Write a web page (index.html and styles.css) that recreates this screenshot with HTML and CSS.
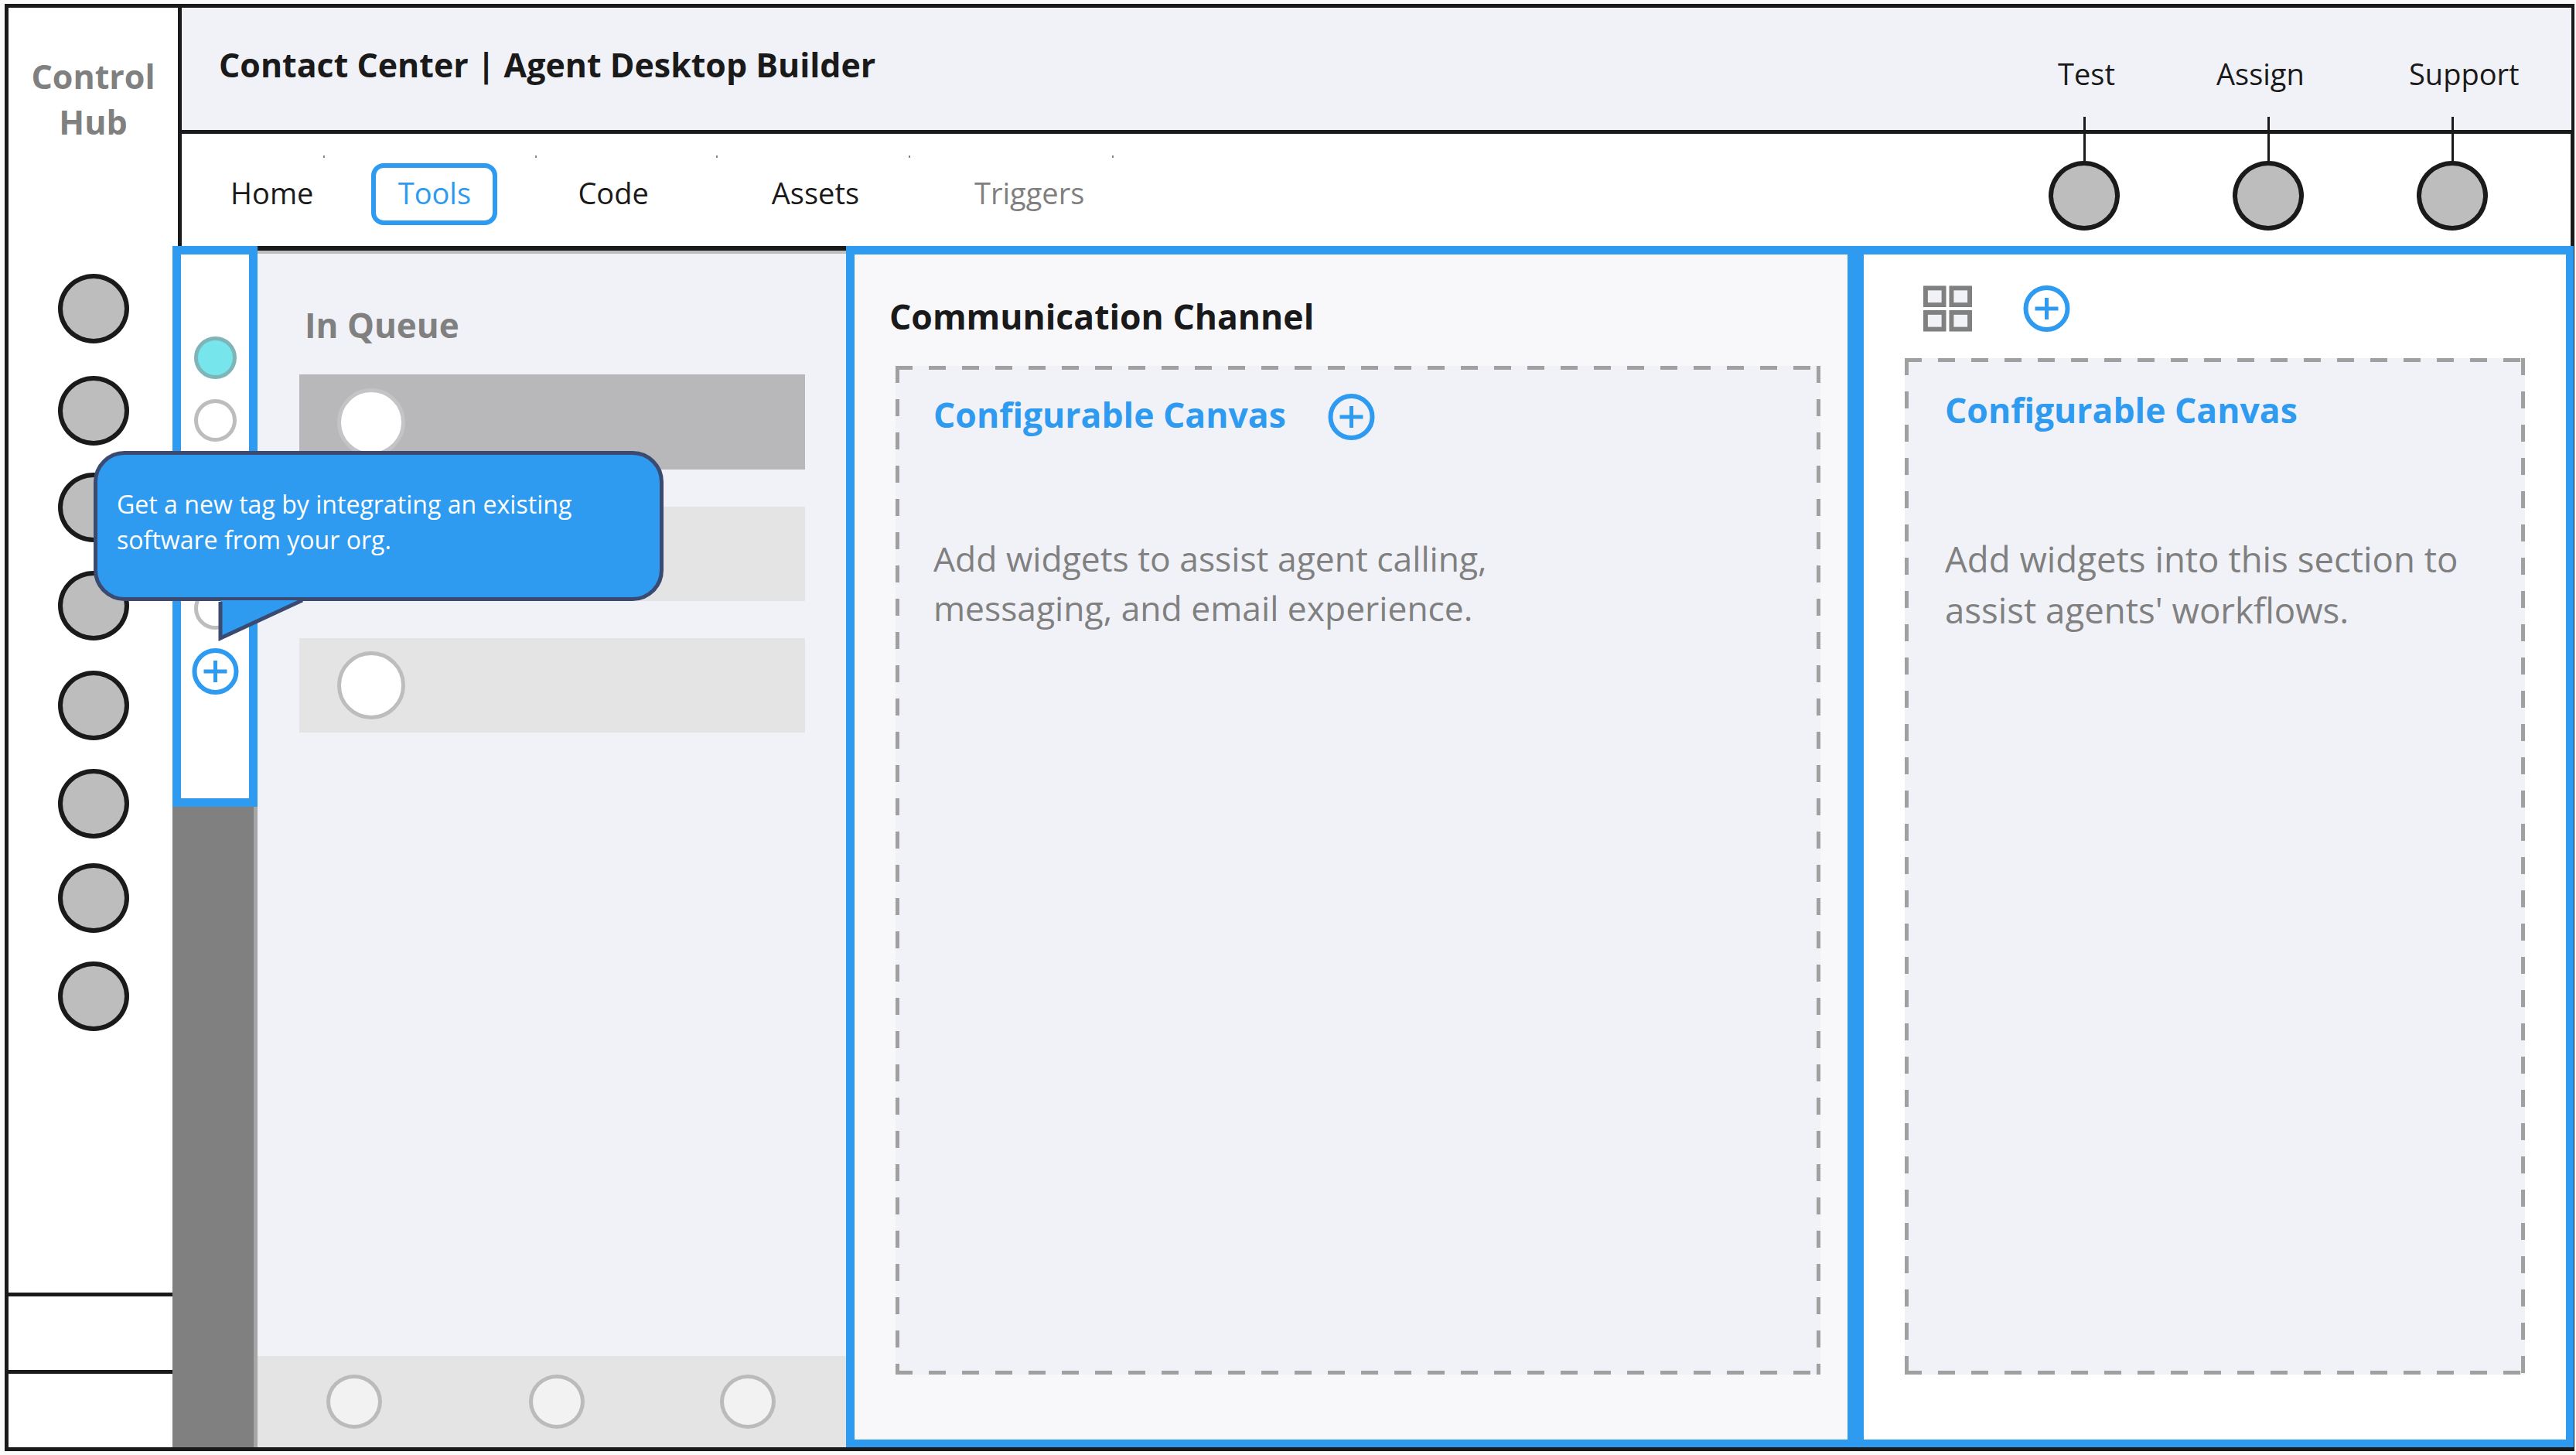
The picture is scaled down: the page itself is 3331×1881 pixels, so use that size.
FILE: index.html
```html
<!DOCTYPE html>
<html lang="en">
<head>
<meta charset="utf-8">
<title>Agent Desktop Builder</title>
<link rel="stylesheet" href="styles.css">
</head>
<body>
<div class="frame">
  <aside class="sidebar">
    <div class="brand">Control<br>Hub</div>
    <div class="side-dots">
      <span class="dot"></span><span class="dot"></span><span class="dot"></span><span class="dot"></span>
      <span class="dot"></span><span class="dot"></span><span class="dot"></span><span class="dot"></span>
    </div>
    <div class="side-foot"><div class="side-cell"></div><div class="side-cell"></div></div>
  </aside>

  <header class="topbar">
    <h1 class="title">Contact Center | Agent Desktop Builder</h1>
    <div class="top-labels"><span class="lbl-test">Test</span><span class="lbl-assign">Assign</span><span class="lbl-support">Support</span></div>
  </header>

  <nav class="navbar">
    <div class="tabs">
      <span class="tab tab-home">Home</span>
      <span class="tab tab-tools">Tools</span>
      <span class="tab tab-code">Code</span>
      <span class="tab tab-assets">Assets</span>
      <span class="tab tab-triggers">Triggers</span>
    </div>
    <div class="nav-dots">
      <span class="nav-dot"><i class="stem"></i><span class="dot"></span></span>
      <span class="nav-dot"><i class="stem"></i><span class="dot"></span></span>
      <span class="nav-dot"><i class="stem"></i><span class="dot"></span></span>
    </div>
    <i class="tick tick1"></i><i class="tick tick2"></i><i class="tick tick3"></i><i class="tick tick4"></i><i class="tick tick5"></i>
  </nav>

  <main class="workspace">
    <div class="rail">
      <div class="rail-tabs">
        <span class="radio radio-on"></span>
        <span class="radio"></span>
        <span class="radio"></span>
        <span class="radio"></span>
        <span class="radio"></span>
        <svg class="plus plus-rail" viewBox="0 0 60 60"><circle cx="30" cy="30" r="27"/><path d="M15 30H45M30 16V44"/></svg>
      </div>
      <div class="rail-fill"></div>
    </div>

    <section class="queue">
      <h2 class="queue-title">In Queue</h2>
      <div class="q-row q-row-active"><span class="avatar avatar-active"></span></div>
      <div class="q-row"><span class="avatar"></span></div>
      <div class="q-row"><span class="avatar"></span></div>
      <div class="queue-foot"><span class="foot-dot"></span><span class="foot-dot foot-b"></span><span class="foot-dot foot-c"></span></div>
    </section>

    <section class="comm">
      <h2 class="comm-title">Communication Channel</h2>
      <div class="canvas canvas-comm">
        <div class="canvas-head">
          <h3 class="canvas-title">Configurable Canvas</h3>
          <svg class="plus plus-head" viewBox="0 0 60 60"><circle cx="30" cy="30" r="27"/><path d="M15 30H45M30 16V44"/></svg>
        </div>
        <p class="canvas-text">Add widgets to assist agent calling,<br>messaging, and email experience.</p>
      </div>
    </section>

    <section class="extra">
      <div class="extra-tools">
        <svg class="grid-icon" viewBox="0 0 64 60"><rect x="3" y="3" width="24" height="22"/><rect x="37" y="3" width="24" height="22"/><rect x="3" y="35" width="24" height="22"/><rect x="37" y="35" width="24" height="22"/></svg>
        <svg class="plus" viewBox="0 0 60 60"><circle cx="30" cy="30" r="27"/><path d="M15 30H45M30 16V44"/></svg>
      </div>
      <div class="canvas canvas-extra">
        <h3 class="canvas-title">Configurable Canvas</h3>
        <p class="canvas-text canvas-text-extra">Add widgets into this section to<br>assist agents' workflows.</p>
      </div>
    </section>
  </main>

  <div class="tip">
    <p class="tip-text">Get a new tag by integrating an existing<br>software from your org.</p>
    <svg class="tip-tail" viewBox="0 0 112 60"><path class="tail-fill" d="M2 0V49L108 0Z"/><path class="tail-line" d="M2 2V49L108 0"/></svg>
  </div>
</div>
</body>
</html>
```

FILE: styles.css
```css
* { box-sizing: border-box; }
html, body { margin: 0; padding: 0; }
body {
  width: 3331px;
  height: 1881px;
  overflow: hidden;
  background: #fbfbfb;
  font-family: "Open Sans", "Noto Sans", sans-serif;
  color: #1a1a1a;
}
h1, h2, h3, p { margin: 0; font-weight: inherit; font-size: inherit; }

.frame {
  position: relative;
  margin: 5px 0 0 6px;
  width: 3323px;
  height: 1871px;
  border: 5px solid #1a1a1a;
  background: #fff;
  display: grid;
  grid-template-columns: 224px 1fr;
  grid-template-rows: 163px 145px 1fr;
}

/* sidebar */
.sidebar {
  grid-row: 1 / 4;
  border-right: 5px solid #1a1a1a;
  display: flex;
  flex-direction: column;
  align-items: center;
}
.brand {
  margin-top: 59px;
  font-size: 43px;
  line-height: 59px;
  font-weight: 700;
  color: #808080;
  text-align: center;
}
.side-dots {
  margin-top: 167px;
  display: flex;
  flex-direction: column;
  gap: 37px;
}
.side-dots .dot:nth-child(2) { margin-top: 5px; }
.side-dots .dot:nth-child(3) { margin-top: -2px; }
.side-dots .dot:nth-child(5) { margin-top: 2px; }
.side-dots .dot:nth-child(7) { margin-top: -5px; }
.dot {
  display: block;
  width: 92px;
  height: 90px;
  border-radius: 50%;
  border: 6px solid #1a1a1a;
  background: #bdbdbd;
}
.side-foot { margin-top: auto; width: 100%; }
.side-cell { height: 100px; border-top: 5px solid #1a1a1a; }

/* header */
.topbar {
  background: #f1f2f7;
  border-bottom: 5px solid #1a1a1a;
  padding-left: 48px;
  position: relative;
}
.title {
  font-size: 42.9px;
  line-height: 60px;
  font-weight: 700;
  margin-top: 44px;
}
.top-labels {
  position: absolute;
  top: 60px;
  left: 0;
  right: 0;
  font-size: 38px;
  line-height: 50px;
}
.top-labels span { position: absolute; top: 0; white-space: nowrap; }
.lbl-test { left: 2426px; }
.lbl-assign { left: 2631px; }
.lbl-support { left: 2880px; }

/* nav */
.navbar {
  position: relative;
  display: flex;
  justify-content: space-between;
  align-items: flex-start;
}
.tabs {
  display: flex;
  align-items: center;
  height: 80px;
  margin-top: 38px;
  font-size: 38px;
  line-height: 50px;
}
.tab { white-space: nowrap; position: relative; top: -2px; }
.tab-home { margin-left: 63px; }
.tab-tools {
  top: 0;
  margin-left: 75px;
  height: 80px;
  width: 163px;
  border: 6px solid #2e9bf0;
  border-radius: 16px;
  color: #2e9bf0;
  display: flex;
  align-items: center;
  justify-content: center;
  padding-bottom: 4px;
}
.tab-code { margin-left: 104px; }
.tab-assets { margin-left: 159px; }
.tab-triggers { margin-left: 149px; color: #808080; }
.nav-dots {
  display: flex;
  gap: 146px;
  margin-right: 108px;
}
.nav-dot {
  display: flex;
  flex-direction: column;
  align-items: center;
  width: 92px;
  margin-top: -22px;
}
.stem {
  display: block;
  width: 3px;
  height: 57px;
  background: #1a1a1a;
}
.tick {
  position: absolute;
  top: 28px;
  width: 2px;
  height: 3px;
  background: #888;
}
.tick1 { left: 183px; }
.tick2 { left: 457px; }
.tick3 { left: 691px; }
.tick4 { left: 940px; }
.tick5 { left: 1203px; }

/* workspace */
.workspace {
  grid-column: 2;
  grid-row: 3;
  position: relative;
  margin-left: -12px;
  margin-right: -3px;
  display: flex;
  min-height: 0;
}
.rail {
  width: 110px;
  display: flex;
  flex-direction: column;
  flex: none;
}
.rail-tabs {
  height: 725px;
  border: 11px solid #2e9bf0;
  background: #fff;
  display: flex;
  flex-direction: column;
  align-items: center;
  gap: 26px;
  padding-top: 106px;
}
.radio {
  display: block;
  flex: none;
  width: 55px;
  height: 55px;
  border-radius: 50%;
  border: 5px solid #bdbdbd;
  background: #fff;
}
.radio-on { border-color: #7fb5b8; background: #76e6ec; }
.plus { display: block; flex: none; width: 61px; height: 60px; }
.plus circle { fill: none; stroke: #2e9bf0; stroke-width: 6; }
.plus path { fill: none; stroke: #2e9bf0; stroke-width: 5; }
.plus-rail { margin-top: -2px; }
.plus-head { margin-top: 6px; }
.rail-fill {
  flex: 1;
  background: #808080;
  border-right: 5px solid #a6a6a6;
}

/* queue */
.queue {
  width: 761px;
  flex: none;
  background: #f1f2f7;
  border-top: 6px solid #1a1a1a;
  box-shadow: inset 0 4px 0 #bdbdbd;
  display: flex;
  flex-direction: column;
}
.queue-title {
  margin: 66px 0 0 61px;
  font-size: 44px;
  line-height: 60px;
  font-weight: 700;
  color: #808080;
}
.q-row {
  flex: none;
  width: 654px;
  height: 122px;
  margin: 0 0 48px 54px;
  background: #e4e4e4;
  display: flex;
  align-items: center;
  padding-left: 49px;
}
.queue-title + .q-row { margin-top: 34px; height: 123px; }
.q-row-active { background: #b8b8ba; }
.avatar {
  display: block;
  width: 88px;
  height: 88px;
  border-radius: 50%;
  border: 5px solid #bdbdbd;
  background: #fff;
}
.avatar-active { border-color: #c4c4c6; }
.queue-foot {
  margin-top: auto;
  height: 118px;
  background: #e4e4e4;
  display: flex;
  align-items: center;
  padding-left: 89px;
}
.foot-dot {
  display: block;
  width: 72px;
  height: 70px;
  border-radius: 50%;
  border: 5px solid #bbb;
  background: #f2f2f2;
}
.foot-b { margin-left: 190px; }
.foot-c { margin-left: 175px; }

/* panels */
.comm {
  width: 1305px;
  flex: none;
  border: solid #2e9bf0;
  border-width: 11px 10px 10px 11px;
  background: #f8f8fb;
  display: flex;
  flex-direction: column;
}
.comm-title {
  margin: 50px 0 0 45px;
  font-size: 44.5px;
  line-height: 60px;
  font-weight: 700;
}
.canvas {
  flex: 1;
  background-color: #f1f2f7;
  background-image:
    linear-gradient(90deg, #a0a0a0 22px, transparent 22px),
    linear-gradient(90deg, #a0a0a0 22px, transparent 22px),
    linear-gradient(#a0a0a0 22px, transparent 22px),
    linear-gradient(#a0a0a0 22px, transparent 22px);
  background-size: 43px 5px, 43px 5px, 5px 43px, 5px 43px;
  background-position: 0 0, 0 100%, 0 0, 100% 0;
  background-repeat: repeat-x, repeat-x, repeat-y, repeat-y;
}
.canvas-comm {
  margin: 34px 35px 84px 53px;
  padding: 30px 0 0 49px;
}
.canvas-head { display: flex; align-items: center; gap: 54px; }
.canvas-title {
  font-size: 44.5px;
  line-height: 60px;
  font-weight: 700;
  color: #2e9bf0;
  white-space: nowrap;
}
.canvas-text {
  margin-top: 121px;
  font-size: 44.4px;
  line-height: 64px;
  color: #808080;
}
.extra {
  width: 929px;
  flex: none;
  background: #fff;
  border: solid #2e9bf0;
  border-width: 11px 10px 10px 11px;
  display: flex;
  flex-direction: column;
}
.extra-tools {
  display: flex;
  align-items: center;
  gap: 66px;
  margin: 40px 0 0 77px;
}
.grid-icon { display: block; width: 63px; height: 60px; }
.grid-icon rect { fill: #f1f2f7; stroke: #808080; stroke-width: 6; }
.canvas-extra {
  margin: 34px 53px 84px 53px;
  padding: 37px 0 0 52px;
}
.canvas-text-extra { margin-top: 129px; font-size: 45.6px; line-height: 66px; }

/* tooltip */
.tip {
  position: absolute;
  left: 110px;
  top: 573px;
  width: 737px;
  height: 194px;
  background: #2e9bf0;
  border: 5px solid #3a4a70;
  border-radius: 40px;
  display: flex;
  align-items: center;
  padding: 0 0 10px 25px;
}
.tip-text {
  color: #fff;
  font-size: 32.1px;
  line-height: 46px;
}
.tip-tail {
  position: absolute;
  left: 157px;
  top: 188px;
  width: 112px;
  height: 60px;
  overflow: visible;
}
.tail-fill { fill: #2e9bf0; }
.tail-line { fill: none; stroke: #3a4a70; stroke-width: 5; }
```
